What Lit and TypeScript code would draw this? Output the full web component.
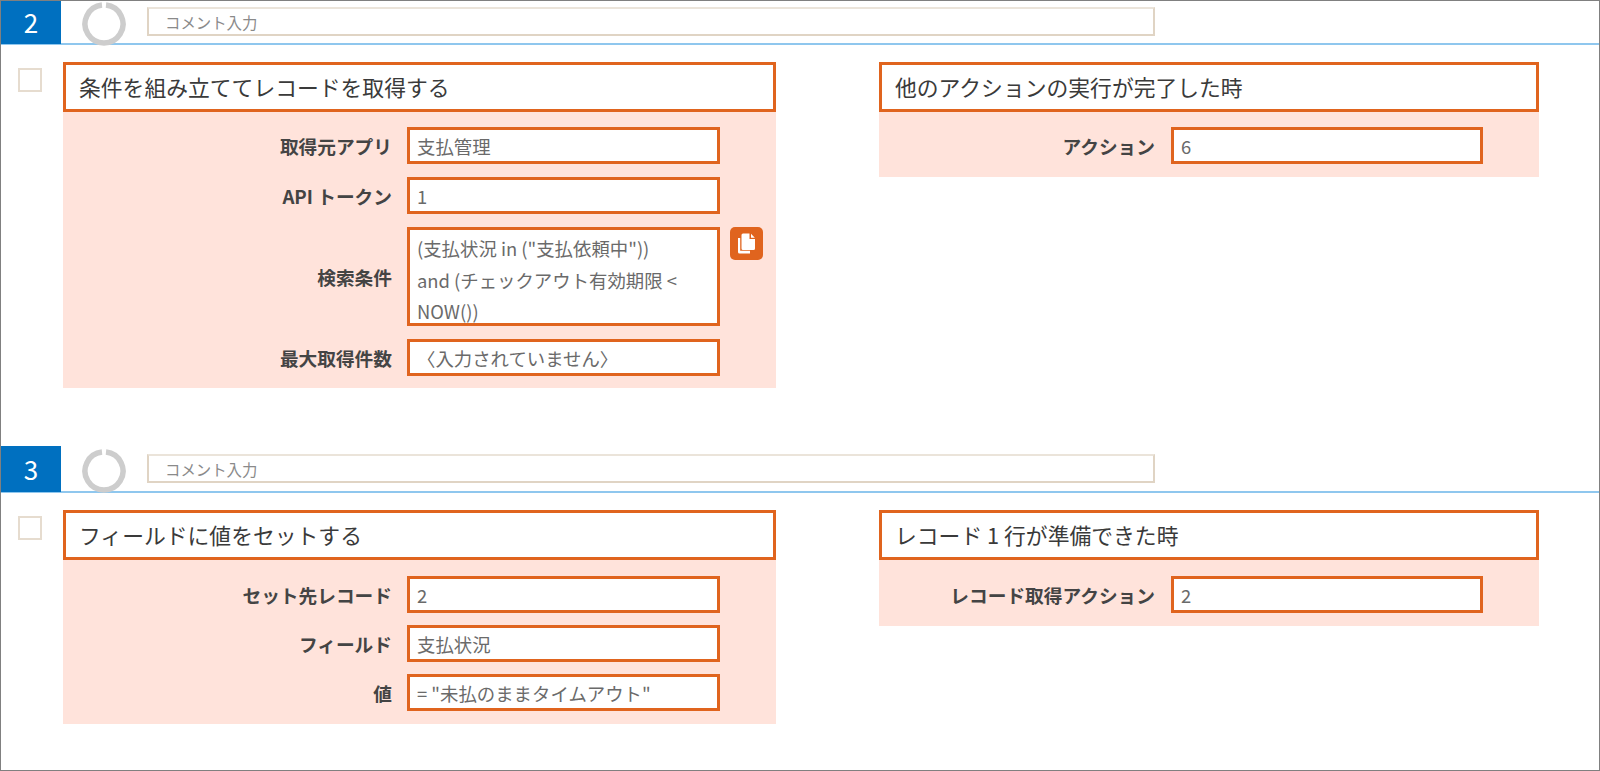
import { LitElement, html, css } from "lit";
import { customElement } from "lit/decorators.js";

interface Field { label: string; value: string; tall?: boolean; copy?: boolean; placeholder?: boolean }
interface Panel { title: string; fields: Field[] }
interface Sec { num: string; left: Panel; right: Panel; first?: boolean }

const sections: Sec[] = [
  {
    num: "2",
    first: true,
    left: {
      title: "条件を組み立ててレコードを取得する",
      fields: [
        { label: "取得元アプリ", value: "支払管理" },
        { label: "API トークン", value: "1" },
        { label: "検索条件", value: '(支払状況 in ("支払依頼中"))\nand (チェックアウト有効期限 < NOW())', tall: true, copy: true },
        { label: "最大取得件数", value: "〈入力されていません〉", placeholder: true },
      ],
    },
    right: { title: "他のアクションの実行が完了した時", fields: [{ label: "アクション", value: "6" }] },
  },
  {
    num: "3",
    left: {
      title: "フィールドに値をセットする",
      fields: [
        { label: "セット先レコード", value: "2" },
        { label: "フィールド", value: "支払状況" },
        { label: "値", value: '= "未払のままタイムアウト"' },
      ],
    },
    right: { title: "レコード 1 行が準備できた時", fields: [{ label: "レコード取得アクション", value: "2" }] },
  },
];

@customElement("app-root")
export class AppRoot extends LitElement {
  static styles = css`
    :host {
      display: block;
      height: 771px;
      box-sizing: border-box;
      border: 1px solid #808080;
      background: #fff;
      overflow: hidden;
      font-family: "Noto Sans CJK JP", "Noto Sans", sans-serif;
      color: #333;
    }
    .section + .section { margin-top: 58px; }
    .header {
      display: flex;
      align-items: flex-start;
      height: 45px;
      border-bottom: 2px solid #8fc7ee;
      box-sizing: content-box;
    }
    .first .header { height: 42px; }
    .num {
      width: 60px;
      height: calc(100% + 1px);
      box-sizing: border-box;
      padding-bottom: 2px;
      background: #0070c0;
      color: #fff;
      font-size: 26px;
      display: flex;
      align-items: center;
      justify-content: center;
      flex: none;
    }
    .ring { width: 44px; height: 44px; margin: 3px 0 0 21px; flex: none; }
    .first .ring { margin-top: 1px; }
    .comment {
      width: 1008px;
      height: 29px;
      box-sizing: border-box;
      margin: 8px 0 0 21px;
      border: 2px solid #e0d4c4;
      border-top-color: #ebe4da;
      font-size: 15.4px;
      color: #8a8a8a;
      padding-left: 16px;
      display: flex;
      align-items: center;
    }
    .first .comment { margin-top: 6px; }
    .content {
      display: grid;
      grid-template-columns: 713px 660px;
      column-gap: 103px;
      padding: 17px 0 0 62px;
      position: relative;
      align-items: start;
    }
    .check {
      position: absolute;
      left: 17px;
      top: 23px;
      width: 24px;
      height: 24px;
      box-sizing: border-box;
      border: 2px solid #e6dccf;
    }
    .title {
      height: 50px;
      box-sizing: border-box;
      border: 3px solid #e0641e;
      background: #fff;
      font-size: 21.8px;
      padding: 0 0 2px 13px;
      display: flex;
      align-items: center;
      color: #3a3a3a;
    }
    .body {
      background: #ffe3db;
      padding: 15px 0 12px;
      display: flex;
      flex-direction: column;
      gap: 13px;
    }
    .first .right .body { padding-bottom: 13px; }
    .tight .body { gap: 12px; padding-bottom: 13px; padding-top: 16px; }
    .row { display: flex; align-items: center; }
    .label {
      width: 329px;
      flex: none;
      text-align: right;
      font-size: 18.7px;
      font-weight: 700;
      color: #444;
      margin-right: 15px;
      white-space: nowrap;
    }
    .right .label { width: 276px; margin-right: 16px; }
    .value {
      width: 313px;
      height: 37px;
      box-sizing: border-box;
      border: 3px solid #e0641e;
      background: #fff;
      font-size: 18.4px;
      color: #6a6a6a;
      padding-left: 7px;
      display: flex;
      align-items: center;
      white-space: nowrap;
    }
    .right .value { width: 312px; }
    .value.tall {
      height: 99px;
      display: block;
      white-space: pre-wrap;
      line-height: 31.5px;
      padding-top: 3px;
      overflow: hidden;
    }
    .copy {
      width: 33px;
      height: 33px;
      flex: none;
      margin: 0 0 auto 10px;
      background: #e0641e;
      border-radius: 5px;
      display: flex;
      align-items: center;
      justify-content: center;
    }
    .copy svg { width: 19px; height: 21px; }
  `;

  private panel(p: Panel, cls: string) {
    return html`<div class=${cls}>
      <div class="title">${p.title}</div>
      <div class="body">
        ${p.fields.map(
          (f) => html`<div class="row">
            <div class="label">${f.label}</div>
            <div class="value ${f.tall ? "tall" : ""}">${f.value}</div>
            ${f.copy
              ? html`<div class="copy">
                  <svg viewBox="0 0 19 21">
                    <path fill="#fff" d="M1 5h2.200v12.800H13V20.500H2.500A1.500 1.500 0 0 1 1 19z" />
                    <path fill="#fff" d="M6 .5h6.500v5.500h5.500V15.500A1.500 1.500 0 0 1 16.500 17H6A1.500 1.500 0 0 1 4.500 15.500V2A1.500 1.500 0 0 1 6 .5zM14 .8 17.800 4.800H14z" />
                  </svg>
                </div>`
              : ""}
          </div>`
        )}
      </div>
    </div>`;
  }

  render() {
    return sections.map(
      (s) => html`<div class="section ${s.first ? "first" : "tight"}">
        <div class="header">
          <div class="num">${s.num}</div>
          <svg class="ring" viewBox="0 0 44 44">
            <path fill="none" stroke="#cdcdcd" stroke-width="5.500" d="M24 3.100A19 19 0 1 1 20 3.100" />
          </svg>
          <div class="comment">コメント入力</div>
        </div>
        <div class="content">
          <div class="check"></div>
          ${this.panel(s.left, "left")}
          ${this.panel(s.right, "right")}
        </div>
      </div>`
    );
  }
}
